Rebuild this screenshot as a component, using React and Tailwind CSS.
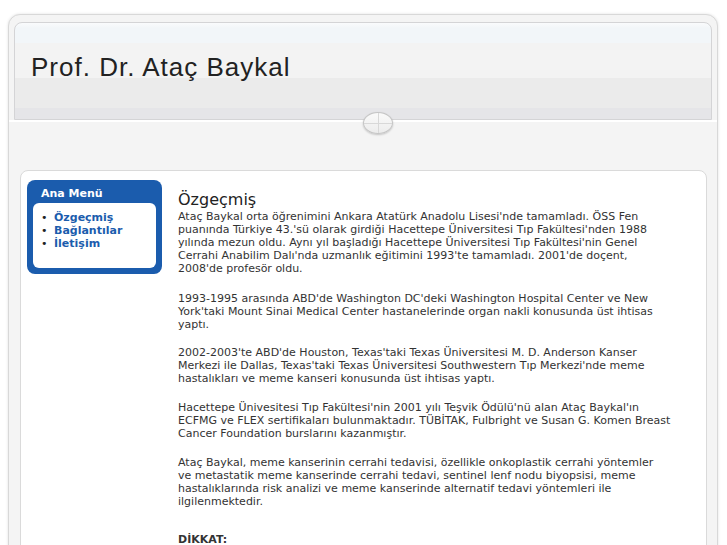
import React from "react";

const paras = [
  [
    "Ataç Baykal orta öğrenimini Ankara Atatürk Anadolu Lisesi'nde tamamladı. ÖSS Fen",
    "puanında Türkiye 43.'sü olarak girdiği Hacettepe Üniversitesi Tıp Fakültesi'nden 1988",
    "yılında mezun oldu. Aynı yıl başladığı Hacettepe Üniversitesi Tıp Fakültesi'nin Genel",
    "Cerrahi Anabilim Dalı'nda uzmanlık eğitimini 1993'te tamamladı. 2001'de doçent,",
    "2008'de profesör oldu.",
  ],
  [
    "1993-1995 arasında ABD'de Washington DC'deki Washington Hospital Center ve New",
    "York'taki Mount Sinai Medical Center hastanelerinde organ nakli konusunda üst ihtisas",
    "yaptı.",
  ],
  [
    "2002-2003'te ABD'de Houston, Texas'taki Texas Üniversitesi M. D. Anderson Kanser",
    "Merkezi ile Dallas, Texas'taki Texas Üniversitesi Southwestern Tıp Merkezi'nde meme",
    "hastalıkları ve meme kanseri konusunda üst ihtisas yaptı.",
  ],
  [
    "Hacettepe Ünivesitesi Tıp Fakültesi'nin 2001 yılı Teşvik Ödülü'nü alan Ataç Baykal'ın",
    "ECFMG ve FLEX sertifikaları bulunmaktadır. TÜBİTAK, Fulbright ve Susan G. Komen Breast",
    "Cancer Foundation burslarını kazanmıştır.",
  ],
  [
    "Ataç Baykal, meme kanserinin cerrahi tedavisi, özellikle onkoplastik cerrahi yöntemler",
    "ve metastatik meme kanserinde cerrahi tedavi, sentinel lenf nodu biyopsisi, meme",
    "hastalıklarında risk analizi ve meme kanserinde alternatif tedavi yöntemleri ile",
    "ilgilenmektedir.",
  ],
];

const gaps = ["mb-[17px]", "mb-[15px]", "mb-[16px]", "mb-[16px]", "mb-[25px]"];

const links = ["Özgeçmiş", "Bağlantılar", "İletişim"];

export default function App() {
  return (
    <div className="bg-white min-h-[545px] pt-[14px] pl-[8px] overflow-hidden font-['DejaVu_Sans',sans-serif]">
      <div className="relative w-[710px] min-h-[560px] rounded-t-[12px] border border-[#d8d8d8] bg-[#f4f4f4] shadow-[0_0_3px_rgba(0,0,0,0.12)]">
        {/* header */}
        <div className="px-[5px] pt-[7px]">
          <div className="h-[98px] rounded-t-[8px] border border-[#d4d4d6] bg-[linear-gradient(to_bottom,#fafbfc_0px,#f2f6f9_5px,#f2f6f9_20px,#f3f3f3_20px,#f3f3f3_55px,#ebebeb_55px,#ebebeb_85px,#e5e5e8_85px)] pl-[16px] pt-[31px]">
            <h1 className="font-['Liberation_Sans',sans-serif] text-[26px] leading-[26px] tracking-[1px] text-[#222]">
              Prof. Dr. Ataç Baykal
            </h1>
          </div>
        </div>
        <div className="h-[2px] bg-white" />

        {/* ornament */}
        <div className="absolute left-[354px] top-[97px] w-[30px] h-[22px] rounded-[50%] border border-[#c4c4c4] bg-[linear-gradient(to_bottom,#fafafa,#ececec)] shadow-[0_1px_2px_rgba(0,0,0,0.2)] overflow-hidden">
          <div className="absolute left-[14px] top-0 h-full w-px bg-[#d8d8d8]" />
          <div className="absolute left-0 top-[10px] w-full h-px bg-[#d8d8d8]" />
        </div>

        {/* content card */}
        <div className="mt-[48px] ml-[11px] mr-[10px] min-h-[400px] rounded-[8px] border border-[#dadada] bg-white flex pl-[6px] pt-[9px]">
          <div className="w-[135px] shrink-0">
            <div className="rounded-[8px] bg-[#1b5cad] px-[6px] pb-[6px]">
              <div className="h-[23px] pl-[8px] pt-[7px] text-[11px] leading-[13px] font-bold text-white">
                Ana Menü
              </div>
              <div className="h-[65px] rounded-[6px] bg-white pl-[8px] pt-[8px]">
                {links.map((l) => (
                  <div key={l} className="flex items-center text-[11px] leading-[13px]">
                    <span className="w-[13px] text-[#222] text-[11px]">•</span>
                    <span className="font-bold text-[#1b5cad]">{l}</span>
                  </div>
                ))}
              </div>
            </div>
          </div>
          <div className="ml-[16px] pt-[10px] text-[#333]">
            <h2 className="text-[16px] leading-[19px] text-[#222] mb-[1px]">Özgeçmiş</h2>
            {paras.map((p, i) => (
              <p key={i} className={`text-[11px] leading-[13px] whitespace-nowrap ${gaps[i]}`}>
                {p.map((line, j) => (
                  <span key={j} className="block">
                    {line}
                  </span>
                ))}
              </p>
            ))}
            <p className="text-[11px] leading-[13px] font-bold text-[#333]">DİKKAT:</p>
          </div>
        </div>
      </div>
    </div>
  );
}
